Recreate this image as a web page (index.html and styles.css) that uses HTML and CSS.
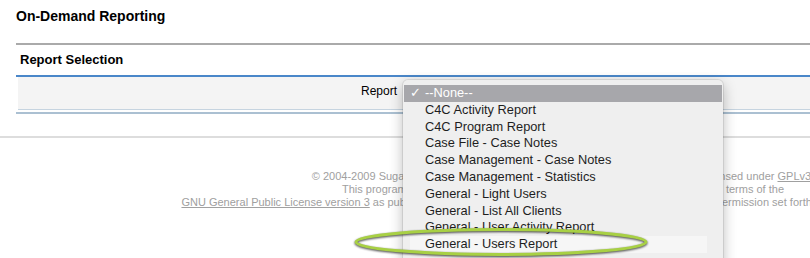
FILE: index.html
```html
<html>
<head>
    <meta http-equiv="content-type" content="text/html;charset=utf-8"/>
    <title>On-Demand Reporting</title>
    <link rel="stylesheet" href="styles.css">
</head>
<body>

<h1 class="pageTitle">On-Demand Reporting</h1>

<div class="panel">
    <div class="panelHead">Report Selection</div>
    <div class="panelBody">
        <label class="fieldLabel">Report</label>
    </div>
</div>
<div class="divider"></div>

<div class="footer">
    <div class="footerLine">&copy; 2004-2009 SugarCRM Inc. The Program is provided AS IS, without warranty. Licensed under <a>GPLv3</a>.</div>
    <div class="footerLine">This program is free software; you can redistribute it and/or modify it under the terms of the</div>
    <div class="footerLine"><a>GNU General Public License version 3</a> as published by the Free Software Foundation including the additional permission set forth in the source code header.</div>
</div>

<!-- open select popup -->
<ul class="menu">
    <li class="menuItem selected"><span class="check">&#10003;</span>--None--</li>
    <li class="menuItem">C4C Activity Report</li>
    <li class="menuItem">C4C Program Report</li>
    <li class="menuItem">Case File - Case Notes</li>
    <li class="menuItem">Case Management - Case Notes</li>
    <li class="menuItem">Case Management - Statistics</li>
    <li class="menuItem">General - Light Users</li>
    <li class="menuItem">General - List All Clients</li>
    <li class="menuItem">General - User Activity Report</li>
    <li class="menuItem marked">General - Users Report</li>
</ul>

<svg class="ring" width="310" height="44" viewBox="0 0 310 44">
    <ellipse cx="151" cy="20" rx="145" ry="12.5" fill="none" stroke="#a8d044" stroke-width="3"/>
</svg>

</body>
</html>
```

FILE: styles.css
```css
@charset "utf-8";

html { background:#fff;}
body { margin:0; padding:0; overflow:hidden; color:#000; font-family:"Liberation Sans", Arial, sans-serif;}
ul,li { list-style:none; margin:0; padding:0;}
a { color:inherit; text-decoration:underline;}

.pageTitle { margin:0; padding:8px 16px 19px; font-size:14px; line-height:16px; font-weight:bold;}

.panel { margin-left:16px; border-top:2px solid #aaa; border-bottom:2px solid #abc0d2;}
.panelHead { height:30px; line-height:30px; padding-left:4px; font-size:13px; font-weight:bold; border-bottom:2px solid #4a87c9;}
.panelBody { margin:0 0 2px 2px; height:28px; padding-bottom:4px; padding-left:343px; line-height:28px; font-size:12px; background:#f4f4f4; border-bottom:1px solid #c6d4e0;}

.divider { margin-top:22px; height:2px; background:#ddd;}

.footer { width:1126px; margin-top:32px; text-align:center; font-size:11px; line-height:13px; color:#a0a0a0;}

.menu {
    position:absolute;
    left:403px;
    top:80px;
    width:320px;
    height:200px;
    padding-top:5px;
    box-sizing:border-box;
    background:#efefef;
    border-radius:5px;
    box-shadow:0 0 0 1px rgba(0,0,0,.08), 0 4px 14px rgba(0,0,0,.28);
    font-size:12.8px;
    color:#1e1e1e;}
.menuItem { position:relative; height:16.8px; line-height:16.8px; padding-left:21px; margin:0 1px; white-space:nowrap;}
.menuItem.selected { background:#a7a7ab; color:#fff;}
.menuItem.marked { background:#f6f6f6; margin:0 16px 0 7px; padding-left:15px;}
.check { position:absolute; left:6px; top:0; font-family:"DejaVu Sans", sans-serif; font-size:13px; font-weight:bold;}

.ring { position:absolute; left:350px; top:222px; filter:drop-shadow(0 1.5px 1.2px rgba(0,0,0,.75));}
```
